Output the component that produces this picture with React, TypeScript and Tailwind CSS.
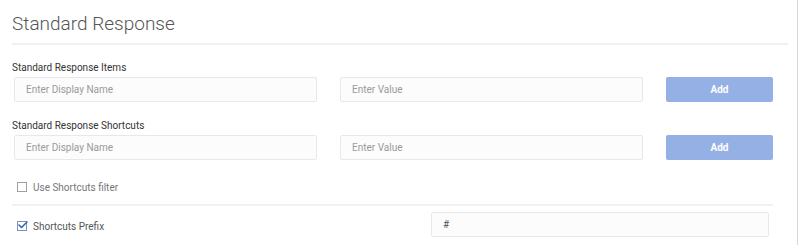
import { Check } from "lucide-react";

function Field({ placeholder, value, className = "" }: { placeholder?: string; value?: string; className?: string }) {
  return (
    <input
      readOnly
      placeholder={placeholder}
      defaultValue={value}
      className={`h-[25px] rounded-[2px] border border-[#e6e8ec] bg-[#fcfcfc] pl-[11px] text-[10px] text-[#555] placeholder:text-[#9a9a9a] outline-none ${className}`}
    />
  );
}

function ItemRow({ label }: { label: string }) {
  return (
    <div>
      <div className="h-[14px] text-[10px] leading-[14px] text-[#333]">{label}</div>
      <div className="mt-[2px] ml-[2px] flex gap-[23px]">
        <Field placeholder="Enter Display Name" className="w-[303px]" />
        <Field placeholder="Enter Value" className="w-[303px]" />
        <button className="h-[25px] w-[107px] rounded-[2px] bg-[#95b0e4] text-[10px] font-bold text-white">
          Add
        </button>
      </div>
    </div>
  );
}

export default function App() {
  return (
    <div className="h-[245px] w-[798px] border-r border-[#d6d6d6] bg-white pl-3 [font-family:Roboto,sans-serif]">
      <h2 className="pt-3 text-[19px] leading-6 font-light text-[#555]">Standard Response</h2>
      <div className="mt-[7px] h-[2px] w-[776px] bg-[#f1f1f1]" />

      <div className="mt-4">
        <ItemRow label="Standard Response Items" />
      </div>
      <div className="mt-[17px]">
        <ItemRow label="Standard Response Shortcuts" />
      </div>

      {/* shortcuts filter */}
      <div className="mt-[20px] flex h-[14px] items-center pl-[5px]">
        <span className="h-[10px] w-[10px] border border-[#a0a0a0] bg-white" />
        <span className="ml-[6px] text-[10px] text-[#777]">Use Shortcuts filter</span>
      </div>
      <div className="mt-[10px] h-[2px] w-[761px] bg-[#f1f1f1]" />

      <div className="mt-[6px] flex h-[25px] items-center">
        <div className="flex w-[419px] items-center pt-[3px] pl-[5px]">
          <span className="relative h-[10px] w-[10px] border border-[#7d93bd] bg-white">
            <Check className="absolute -top-[3px] -left-[1px] h-[12px] w-[12px] text-[#2f5fb8]" strokeWidth={3} />
          </span>
          <span className="ml-[6px] text-[10px] text-[#555]">Shortcuts Prefix</span>
        </div>
        <Field value="#" className="w-[338px]" />
      </div>
    </div>
  );
}
